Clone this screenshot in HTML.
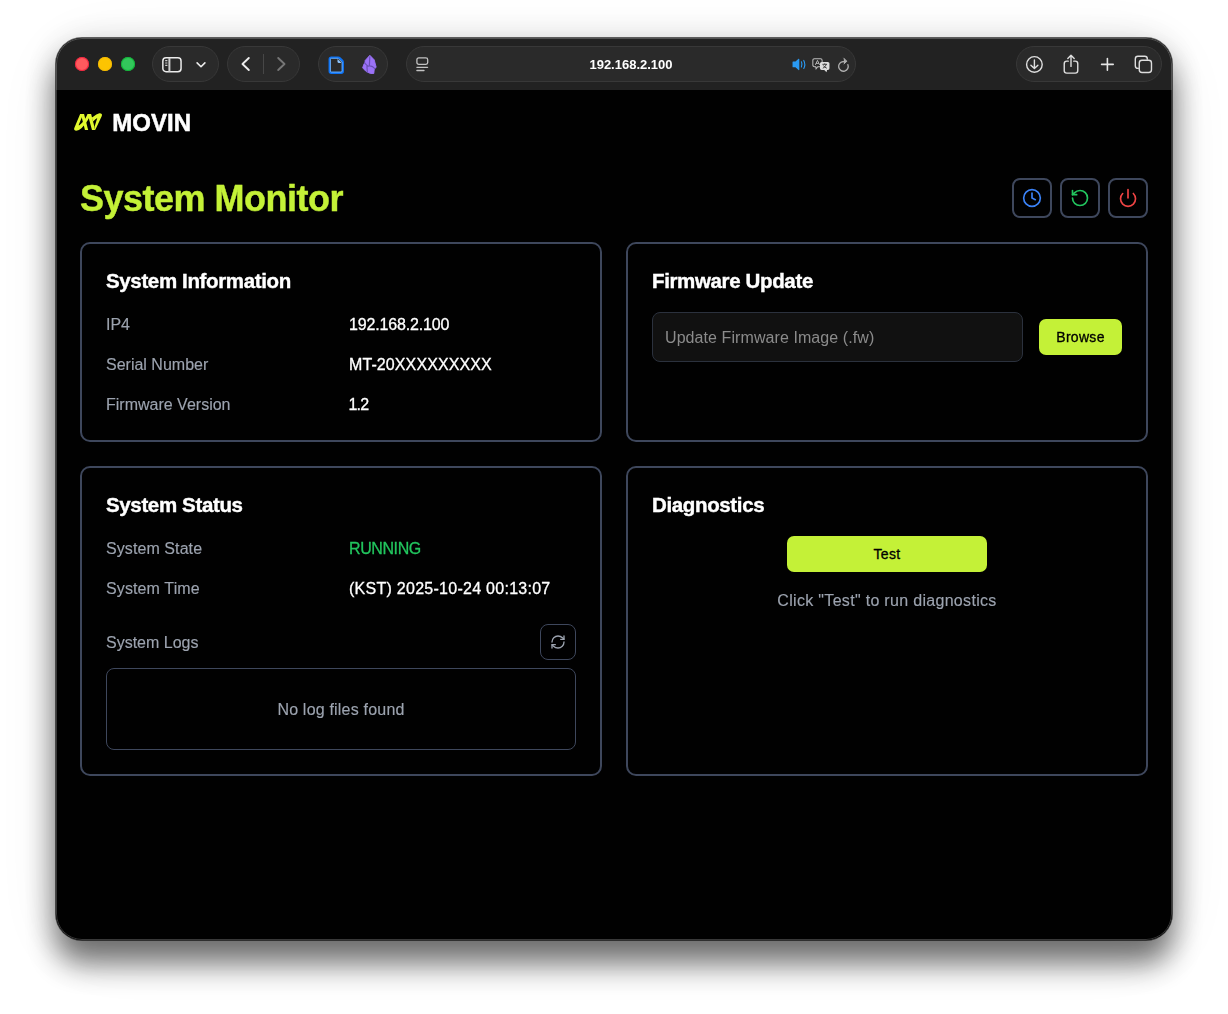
<!DOCTYPE html>
<html lang="en">
<head>
<meta charset="utf-8">
<title>System Monitor</title>
<style>
*{box-sizing:border-box;margin:0;padding:0}
html,body{width:1228px;height:1014px;background:#fff;overflow:hidden}
body{font-family:"Liberation Sans",Arial,sans-serif;position:relative;-webkit-font-smoothing:antialiased}
.abs{position:absolute}
#win{opacity:.9999;position:absolute;left:56px;top:38px;width:1116px;height:902px;border-radius:26px;background:#000;overflow:hidden;
  box-shadow:0 0 0 1px rgba(0,0,0,.6),0 24px 30px 0 rgba(0,0,0,.5),0 6px 36px rgba(0,0,0,.18),0 10px 80px rgba(0,0,0,.08)}
#win:after{content:"";position:absolute;inset:0;border-radius:26px;border:1px solid rgba(255,255,255,.22);pointer-events:none}
#bar{position:absolute;left:0;top:0;width:1116px;height:52px;background:#222222}
.tl{position:absolute;top:19px;width:14px;height:14px;border-radius:50%}
.pill{position:absolute;top:8px;height:36px;border-radius:18px;background:#2a2a2a;border:1px solid #383838}
.pill svg{position:absolute;overflow:visible}
#url{position:absolute;left:0;right:0;top:0;height:35px;line-height:35px;text-align:center;color:#fff;font-weight:bold;font-size:13px}
#page{position:absolute;left:0;top:52px;width:1116px;height:850px;background:#000;color:#fff}
.t{position:absolute;white-space:nowrap;line-height:1}
.card{position:absolute;border:2px solid #3e475c;border-radius:10px;background:#000}
.h2{font-weight:bold;font-size:20.5px;letter-spacing:-.36px;color:#fff;-webkit-text-stroke:.4px #fff}
.lab{font-size:16px;color:#9ca3af;-webkit-text-stroke:.15px}
.val{font-size:16px;color:#fff;-webkit-text-stroke:.3px}
.ib{position:absolute;width:40px;height:40px;border:2px solid #3e475c;border-radius:8px;background:#000}
.ib svg{position:absolute;left:8px;top:8px}
.btn{position:absolute;background:#c4f137;border-radius:7px;color:#000;font-size:14px;letter-spacing:.3px;-webkit-text-stroke:.3px #000;text-align:center}
</style>
</head>
<body>
<div id="win">
  <div id="bar">
    <div class="tl" style="left:19px;background:#ff5a5e;box-shadow:inset 0 0 0 1px rgba(240,20,55,.75)"></div>
    <div class="tl" style="left:42px;background:#fdc400;box-shadow:inset 0 0 0 1px rgba(245,185,0,.8)"></div>
    <div class="tl" style="left:65px;background:#33c75b;box-shadow:inset 0 0 0 1px rgba(10,180,50,.8)"></div>
    <div class="pill" id="p1" style="left:96px;width:67px">
      <svg style="left:9px;top:10px" width="22" height="17" viewBox="0 0 22 17" fill="none" stroke="#ececec" stroke-width="1.5"><rect x="0.85" y="0.75" width="18.2" height="14" rx="3.2"/><path d="M7.4 0.75V14.75" stroke="#cdcdcd" stroke-width="2"/><path d="M3.2 3.6h2.2M3.2 6h2.2M3.2 8.4h2.2" stroke="#cfcfcf" stroke-width="1.2"/></svg>
      <svg style="left:43px;top:15px" width="11" height="7" viewBox="0 0 11 7" fill="none" stroke="#ececec" stroke-width="1.6" stroke-linecap="round" stroke-linejoin="round"><path d="M1.1 0.9L5 4.7L8.9 0.9"/></svg>
    </div>
    <div class="pill" id="p2" style="left:171px;width:73px">
      <svg style="left:13px;top:9px" width="10" height="16" viewBox="0 0 10 16" fill="none" stroke="#ececec" stroke-width="1.9" stroke-linecap="round" stroke-linejoin="round"><path d="M7.8 2L1.5 8L7.8 14"/></svg>
      <div style="position:absolute;left:35px;top:7px;width:1px;height:20px;background:#474747"></div>
      <svg style="left:49px;top:9px" width="10" height="16" viewBox="0 0 10 16" fill="none" stroke="#767676" stroke-width="1.9" stroke-linecap="round" stroke-linejoin="round"><path d="M1.2 2L7.5 8L1.2 14"/></svg>
    </div>
    <div class="pill" id="p3" style="left:262px;width:70px">
      <svg style="left:9px;top:9px" width="18" height="20" viewBox="0 0 18 20" fill="none"><path d="M3.3 1.5H10.2Q11.2 1.5 11.9 2.2L14.2 4.5Q14.9 5.2 14.9 6.2V15.2Q14.9 16.9 13.2 16.9H3.3Q1.6 16.9 1.6 15.2V3.2Q1.6 1.5 3.3 1.5Z" stroke="#0d72f4" stroke-width="2.1" stroke-linejoin="round"/><path d="M3.5 2.3H10.1L14.1 6.3V15Q14.1 16.1 13 16.1H3.5Q2.4 16.1 2.4 15V3.4Q2.4 2.3 3.5 2.3Z" stroke="#7dbdff" stroke-width=".8" stroke-linejoin="round"/><path d="M9.5 2.9L13.6 7H11.1Q9.5 7 9.5 5.4Z" fill="#8ec6ff"/></svg>
      <svg style="left:37px;top:5px" width="28" height="26" viewBox="0 0 28 26"><path d="M13.85 3.3L18.2 7.8L20.2 15.3L18.3 16.9L17.8 21.5L14.4 21.5L9.9 19.3L6.6 15.8L8 12L9.1 10.4L9.1 8.6Z" fill="#9b72f7" stroke="#9b72f7" stroke-width="0.9" stroke-linejoin="round"/><path d="M13.8 4.8L13.4 13.4M11 14.4Q13.6 13.2 16.4 14.6L18.8 16.6M8.6 10.8L11.4 13.9M11 14.9L11.3 20" stroke="#6a50b4" stroke-width="1.2" fill="none" stroke-linecap="round"/></svg>
    </div>
    <div class="pill" id="p4" style="left:350px;width:450px"><div id="url">192.168.2.100</div>
      <svg style="left:9px;top:10px" width="14" height="15" viewBox="0 0 14 15" fill="none" stroke="#c2c2c2" stroke-width="1.3" stroke-linecap="round"><rect x="0.9" y="0.9" width="10.8" height="6.4" rx="1.8"/><path d="M0.9 10.3H11.6M0.9 13.5H8"/></svg>
      <svg style="left:385px;top:10.7px" width="14.6" height="12.8" viewBox="0 0 16 14"><path d="M0.6 4.4Q0.6 3.8 1.2 3.8H3.8L7.2 0.9Q8 0.3 8 1.3V12.7Q8 13.7 7.2 13.1L3.8 10.2H1.2Q0.6 10.2 0.6 9.6Z" fill="#2a9af3"/><path d="M10.3 4.2Q11.6 7 10.3 9.8M12.9 2.6Q15.2 7 12.9 11.4" stroke="#2a9af3" stroke-width="1.2" fill="none" stroke-linecap="round"/></svg>
      <svg style="left:405px;top:10.5px" width="18.6" height="15.8" viewBox="0 0 20 17"><path d="M2.6 0.9H9.2Q10.9 0.9 10.9 2.6V7.6Q10.9 9.3 9.2 9.3H6.2L4.4 11.6L4 9.3H2.6Q0.9 9.3 0.9 7.6V2.6Q0.9 0.9 2.6 0.9Z" fill="none" stroke="#bdbdbd" stroke-width="1.1"/><path d="M3.6 7.4L5.9 2.6L8.2 7.4M4.4 5.8H7.4" stroke="#bdbdbd" stroke-width="1" fill="none"/><path d="M10.4 4.2H17Q18.8 4.2 18.8 6V11Q18.8 12.8 17 12.8H16.2L15.6 15.4L13.2 12.8H10.4Q8.6 12.8 8.6 11V6Q8.6 4.2 10.4 4.2Z" fill="#dedede"/><path d="M11.2 6.8H16.2M13.7 5.8V6.8M15.4 6.8Q14.6 9.8 11.6 11M12.2 8Q13.4 10.2 16 11" stroke="#2a2a2a" stroke-width="0.9" fill="none"/></svg>
      <svg style="left:429.5px;top:9.5px" width="13.2" height="16" viewBox="0 0 14 17" fill="none" stroke="#adadad" stroke-width="1.4" stroke-linecap="round" stroke-linejoin="round"><path d="M11.6 8.2A5.1 5.1 0 1 1 6.6 4.9"/><path d="M6.4 4.9H9.6" /><path d="M7.2 1.2L10.4 4.4L7.4 7.4" fill="#adadad" stroke-width="1"/></svg>
    </div>
    <div class="pill" id="p5" style="left:960px;width:146px">
      <svg style="left:8px;top:8.3px" width="19" height="19" viewBox="0 0 19 19" fill="none" stroke="#dedede" stroke-width="1.4" stroke-linecap="round" stroke-linejoin="round"><circle cx="9.4" cy="9.4" r="7.8"/><path d="M9.4 5V13.4M5.9 10.2L9.4 13.6L12.9 10.2"/></svg>
      <svg style="left:45.6px;top:7px" width="16" height="20.7" viewBox="0 0 17 22" fill="none" stroke="#dedede" stroke-width="1.5" stroke-linecap="round" stroke-linejoin="round"><path d="M5.6 7.6H4Q1.3 7.6 1.3 10.3V17.6Q1.3 20.3 4 20.3H13Q15.7 20.3 15.7 17.6V10.3Q15.7 7.6 13 7.6H11.4"/><path d="M8.5 13.2V1.6M5.1 4.8L8.5 1.4L11.9 4.8"/></svg>
      <svg style="left:82.5px;top:10px" width="15" height="15" viewBox="0 0 15 15" fill="none" stroke="#e6e6e6" stroke-width="1.6" stroke-linecap="round"><path d="M7.4 1.6V13.2M1.6 7.4H13.2"/></svg>
      <svg style="left:116.6px;top:8.2px" width="18.8" height="18.8" viewBox="0 0 20 20" fill="none" stroke="#dedede" stroke-width="1.5" stroke-linejoin="round"><path d="M5.2 14.2H4.2Q1.4 14.2 1.4 11.4V4.2Q1.4 1.4 4.2 1.4H11.4Q14.2 1.4 14.2 4.2V5"/><rect x="5.6" y="5.6" width="13" height="13" rx="2.9"/></svg>
    </div>
  </div>
  <div id="page">
    <svg class="abs" id="logo" style="left:14px;top:18px" width="36" height="28" viewBox="0 0 1228 955" fill="#e1f82e">
      <path d="M345 205L143 688Q125 765 215 776Q300 770 400 680Q520 570 600 430Q660 320 720 205L600 205Q540 340 470 440Q400 520 318 585Q288 600 300 570L398 332L455 205Z"/>
      <path d="M370 205L480 205L620 750L510 750Z"/>
      <path d="M600 205L720 205L860 750L750 750Z"/>
      <path d="M745 320L790 295Q900 205 1000 176Q1115 170 1085 270L885 700L855 750L840 630L930 342Q860 380 780 465Z"/>
    </svg>
    <div class="t" id="brand" style="left:56.3px;top:21px;font-size:24px;letter-spacing:0px;font-weight:bold;-webkit-text-stroke:.5px">MOVIN</div>
    <div class="t" id="title" style="left:24px;top:91px;font-size:36px;letter-spacing:-.5px;font-weight:bold;color:#c4f137;-webkit-text-stroke:.4px">System Monitor</div>

    <div class="ib" style="left:956px;top:88px"><svg width="20" height="20" viewBox="0 0 24 24" fill="none" stroke="#3b82f6" stroke-width="2" stroke-linecap="round" stroke-linejoin="round"><circle cx="12" cy="12" r="10"/><polyline points="12 6 12 12 16 14"/></svg></div>
    <div class="ib" style="left:1004px;top:88px"><svg width="20" height="20" viewBox="0 0 24 24" fill="none" stroke="#22c55e" stroke-width="2" stroke-linecap="round" stroke-linejoin="round"><path d="M3 12a9 9 0 1 0 9-9 9.75 9.75 0 0 0-6.74 2.74L3 8"/><path d="M3 3v5h5"/></svg></div>
    <div class="ib" style="left:1052px;top:88px"><svg width="20" height="20" viewBox="0 0 24 24" fill="none" stroke="#ef4444" stroke-width="2" stroke-linecap="round" stroke-linejoin="round"><path d="M12 2v10"/><path d="M18.4 6.6a9 9 0 1 1-12.77.04"/></svg></div>

    <div class="card" style="left:24px;top:152px;width:522px;height:200px">
      <div class="t h2" style="left:24px;top:27px">System Information</div>
      <div class="t lab" style="left:24px;top:72.5px">IP4</div>
      <div class="t val" style="left:267px;top:72.5px;letter-spacing:-.17px">192.168.2.100</div>
      <div class="t lab" style="left:24px;top:112.5px">Serial Number</div>
      <div class="t val" style="left:267px;top:112.5px;letter-spacing:.1px">MT-20XXXXXXXXX</div>
      <div class="t lab" style="left:24px;top:152.5px">Firmware Version</div>
      <div class="t val" style="left:266.5px;top:152.5px;letter-spacing:-.8px">1.2</div>
    </div>

    <div class="card" style="left:570px;top:152px;width:522px;height:200px">
      <div class="t h2" style="left:24px;top:27px">Firmware Update</div>
      <div class="abs" style="left:24px;top:68px;width:371px;height:50px;border:1px solid #2b313d;border-radius:8px;background:#111111"></div>
      <div class="t" style="left:37px;top:86px;font-size:16px;letter-spacing:.08px;color:#8b8b8b">Update Firmware Image (.fw)</div>
      <div class="btn" style="left:411px;top:75px;width:83px;height:36px;line-height:36px">Browse</div>
    </div>

    <div class="card" style="left:24px;top:376px;width:522px;height:310px">
      <div class="t h2" style="left:24px;top:27px">System Status</div>
      <div class="t lab" style="left:24px;top:72.5px;letter-spacing:.08px">System State</div>
      <div class="t val" style="left:267px;top:72.5px;color:#22c55e;letter-spacing:-.4px">RUNNING</div>
      <div class="t lab" style="left:24px;top:112.5px;letter-spacing:.12px">System Time</div>
      <div class="t val" style="left:267px;top:112.5px;letter-spacing:.27px">(KST) 2025-10-24 00:13:07</div>
      <div class="t lab" style="left:24px;top:167px">System Logs</div>
      <div class="abs" style="left:458px;top:156px;width:36px;height:36px;border:1px solid #3e475c;border-radius:8px"><svg style="position:absolute;left:9px;top:9px" width="16" height="16" viewBox="0 0 24 24" fill="none" stroke="#9ca3af" stroke-width="2" stroke-linecap="round" stroke-linejoin="round"><path d="M3 12a9 9 0 0 1 9-9 9.75 9.75 0 0 1 6.74 2.74L21 8"/><path d="M21 3v5h-5"/><path d="M21 12a9 9 0 0 1-9 9 9.75 9.75 0 0 1-6.74-2.74L3 16"/><path d="M8 16H3v5"/></svg></div>
      <div class="abs" style="left:24px;top:200px;width:470px;height:82px;border:1px solid #3e475c;border-radius:8px"></div>
      <div class="t lab" style="left:24px;width:470px;text-align:center;top:234px;letter-spacing:.2px">No log files found</div>
    </div>

    <div class="card" style="left:570px;top:376px;width:522px;height:310px">
      <div class="t h2" style="left:24px;top:27px">Diagnostics</div>
      <div class="btn" style="left:159px;top:68px;width:200px;height:36px;line-height:36px">Test</div>
      <div class="t lab" style="left:0;width:518px;text-align:center;top:125px;letter-spacing:.31px">Click "Test" to run diagnostics</div>
    </div>
  </div>
</div>
</body>
</html>
